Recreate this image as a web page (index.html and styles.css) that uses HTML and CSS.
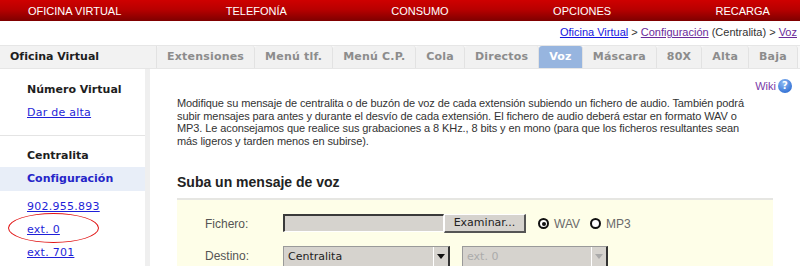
FILE: index.html
```html
<!DOCTYPE html>
<html lang="es">
<head>
<meta charset="utf-8">
<title>Oficina Virtual - Voz</title>
<link rel="stylesheet" href="styles.css">
</head>
<body>
<nav class="topnav">
  <a href="#">OFICINA VIRTUAL</a>
  <a href="#">TELEFONÍA</a>
  <a href="#">CONSUMO</a>
  <a href="#">OPCIONES</a>
  <a href="#">RECARGA</a>
</nav>
<div class="crumbs">
  <a class="lnk" href="#">Oficina Virtual</a>&nbsp;&gt; <a class="vis" href="#">Configuración</a>&nbsp;(Centralita) &gt; <a class="vis" href="#">Voz</a>
</div>
<div class="tabbar">
  <div class="tab-title">Oficina Virtual</div>
  <ul class="tabs">
    <li>Extensiones</li>
    <li>Menú tlf.</li>
    <li>Menú C.P.</li>
    <li>Cola</li>
    <li>Directos</li>
    <li class="active">Voz</li>
    <li>Máscara</li>
    <li>80X</li>
    <li>Alta</li>
    <li>Baja</li>
  </ul>
</div>
<div class="layout">
  <aside class="sidebar">
    <section class="side-sec first">
      <h4 class="side-title">Número Virtual</h4>
      <a class="side-link" href="#">Dar de alta</a>
    </section>
    <section class="side-sec second">
      <h4 class="side-title">Centralita</h4>
      <div class="side-current">Configuración</div>
      <ul class="side-list">
        <li><a class="side-link" href="#">902.955.893</a></li>
        <li><a class="side-link" href="#">ext. 0</a></li>
        <li><a class="side-link" href="#">ext. 701</a></li>
      </ul>
    </section>
    <span class="annot"></span>
  </aside>
  <main class="main">
    <div class="wiki-row"><a class="wiki" href="#">Wiki</a><span class="help">?</span></div>
    <p class="intro">Modifique su mensaje de centralita o de buzón de voz de cada extensión subiendo un fichero de audio. También podrá subir mensajes para antes y durante el desvío de cada extensión. El fichero de audio deberá estar en formato WAV o MP3. Le aconsejamos que realice sus grabaciones a 8 KHz., 8 bits y en mono (para que los ficheros resultantes sean más ligeros y tarden menos en subirse).</p>
    <h3 class="section-title">Suba un mensaje de voz</h3>
    <form class="upload">
      <div class="row">
        <label class="lbl">Fichero:</label>
        <span class="textbox"></span>
        <span class="btn">Examinar...</span>
        <span class="radio checked"></span><span class="rlabel">WAV</span>
        <span class="radio"></span><span class="rlabel">MP3</span>
      </div>
      <div class="row second-row">
        <label class="lbl">Destino:</label>
        <div class="select main-select"><span class="val">Centralita</span><span class="arrow"><span class="tri"></span></span></div>
        <div class="select disabled"><span class="val">ext. 0</span><span class="arrow"><span class="tri"></span></span></div>
      </div>
    </form>
  </main>
</div>
</body>
</html>
```

FILE: styles.css
```css
html, body {
  margin: 0;
  padding: 0;
  overflow: hidden;
}
body {
  width: 800px;
  height: 266px;
  background: #fff;
  font-family: "DejaVu Sans", sans-serif;
  font-size: 11px;
  color: #333;
}

/* top navigation */
.topnav {
  height: 21px;
  display: flex;
  justify-content: space-between;
  align-items: center;
  padding: 0 30px 0 28px;
  background: linear-gradient(#cf0000, #b80000 45%, #7e0000);
  font-family: "Liberation Sans", Arial, sans-serif;
  font-size: 11px;
}
.topnav a {
  color: #fff;
  text-decoration: none;
}

/* breadcrumb */
.crumbs {
  height: 24px;
  line-height: 20px;
  padding-top: 1px;
  text-align: right;
  padding-right: 3px;
  font-family: "Liberation Sans", Arial, sans-serif;
  font-size: 11px;
  color: #333;
  box-sizing: border-box;
}
.lnk { color: #1515e0; }
.vis { color: #6a2a9a; }

/* tabs */
.tabbar {
  display: flex;
  height: 24px;
  box-sizing: border-box;
  border-top: 1px solid #e6e6e6;
  border-bottom: 1px solid #e6e6e6;
  background: #f7f7f7;
}
.tab-title {
  width: 157px;
  box-sizing: border-box;
  padding-left: 10px;
  line-height: 22px;
  font-weight: bold;
  color: #1e1e1e;
  background: #f2f2f2;
  border-right: 1px solid #e2e2e2;
}
.tabs {
  display: flex;
  margin: 0;
  padding: 0;
  list-style: none;
}
.tabs li {
  padding: 0 10px;
  line-height: 22px;
  font-weight: bold;
  letter-spacing: 0.2px;
  color: #8c8c8c;
  background: #f1f1f1;
  border-right: 1px solid #e2e2e2;
  border-radius: 3px 3px 0 0;
}
.tabs li.active {
  background: #97b5df;
  color: #fff;
}

/* layout */
.layout {
  display: flex;
}
.sidebar {
  position: relative;
  width: 145px;
  flex: none;
  border-right: 5px solid #efefef;
  height: 200px;
}
.side-sec.first {
  padding: 10px 0 11px 27px;
  border-bottom: 1px solid #e4e4e4;
}
.side-sec.second {
  padding-top: 9px;
}
.side-title {
  margin: 0;
  font-size: 11px;
  line-height: 22px;
  font-weight: bold;
  color: #1e1e1e;
}
.second .side-title {
  padding-left: 27px;
}
.side-link {
  display: block;
  line-height: 23px;
  color: #1f1fd8;
  letter-spacing: 0.25px;
}
.side-current {
  line-height: 24px;
  padding-left: 27px;
  background: #e8eef8;
  color: #2525c8;
  font-weight: bold;
}
.side-list {
  list-style: none;
  margin: 0;
  padding: 4px 0 0 27px;
}
.annot {
  position: absolute;
  left: 8px;
  top: 144px;
  width: 89px;
  height: 28px;
  border: 1.6px solid #e11414;
  border-radius: 50%;
}

/* main */
.main {
  flex: 1;
}
.wiki-row {
  display: flex;
  justify-content: flex-end;
  align-items: center;
  gap: 2px;
  height: 14px;
  padding: 10px 8px 0 0;
  font-family: "Liberation Sans", Arial, sans-serif;
  font-size: 11px;
}
.wiki {
  color: #7a3aa8;
  text-decoration: none;
}
.help {
  width: 14px;
  height: 14px;
  border-radius: 50%;
  background: radial-gradient(circle at 40% 30%, #8fbaf2, #3b78d8 70%, #2a60c0);
  color: #fff;
  font-family: "DejaVu Sans", sans-serif;
  font-weight: bold;
  font-size: 10px;
  line-height: 14px;
  text-align: center;
}
.intro {
  margin: 4px 0 0 27px;
  width: 572px;
  font-family: "Liberation Sans", Arial, sans-serif;
  font-size: 11px;
  letter-spacing: -0.1px;
  line-height: 12.6px;
  color: #333;
}
.section-title {
  margin: 27px 0 0 27px;
  font-family: "Liberation Sans", Arial, sans-serif;
  font-size: 14px;
  line-height: 16px;
  font-weight: bold;
  color: #222;
}
.upload {
  margin: 8px 0 0 27px;
  width: 596px;
  height: 80px;
  box-sizing: border-box;
  background: #fefee8;
  border-top: 2px solid #e6e6e2;
  padding: 14px 0 0 28px;
}
.row {
  display: flex;
  align-items: center;
  height: 19px;
}
.second-row {
  margin-top: 13px;
}
.lbl {
  width: 78px;
  font-family: "Liberation Sans", Arial, sans-serif;
  font-size: 12px;
  color: #555;
}
.textbox {
  width: 161px;
  height: 18px;
  box-sizing: border-box;
  background: #d6d3ce;
  border-top: 2px solid #3a3a3a;
  border-left: 2px solid #3a3a3a;
  border-right: 1px solid #fff;
  border-bottom: 1px solid #fff;
  align-self: flex-start;
}
.btn {
  width: 82px;
  height: 19px;
  box-sizing: border-box;
  background: #d6d3ce;
  border-top: 1px solid #fff;
  border-left: 1px solid #fff;
  border-right: 2px solid #555;
  border-bottom: 2px solid #555;
  font-size: 11px;
  line-height: 16px;
  text-align: center;
  color: #222;
}
.radio {
  width: 11px;
  height: 11px;
  box-sizing: border-box;
  border: 2px solid #111;
  border-radius: 50%;
  background: #fff;
  margin-left: 12px;
  position: relative;
}
.radio + .rlabel {
  margin-left: 5px;
}
.rlabel + .radio {
  margin-left: 10px;
}
.radio.checked::after {
  content: "";
  position: absolute;
  left: 1.5px;
  top: 1.5px;
  width: 4px;
  height: 4px;
  border-radius: 50%;
  background: #111;
}
.rlabel {
  font-family: "Liberation Sans", Arial, sans-serif;
  font-size: 12px;
  color: #6a6a6a;
}
.select {
  display: flex;
  align-items: stretch;
  height: 22px;
  box-sizing: border-box;
  align-self: flex-start;
  background: #d6d3ce;
  border-top: 1px solid #9a9a9a;
  border-left: 1px solid #9a9a9a;
  border-right: 2px solid #333;
  border-bottom: 2px solid #333;
}
.main-select {
  width: 167px;
}
.select.disabled {
  width: 146px;
  margin-left: 12px;
}
.val {
  flex: 1;
  padding-left: 4px;
  line-height: 19px;
  font-size: 11px;
  color: #222;
}
.disabled .val {
  color: #ababab;
}
.arrow {
  width: 15px;
  border-left: 1px solid #fff;
  display: flex;
  justify-content: center;
  padding-top: 7px;
  box-sizing: border-box;
}
.tri {
  width: 0;
  height: 0;
  border-left: 4px solid transparent;
  border-right: 4px solid transparent;
  border-top: 5px solid #111;
}
.disabled .tri {
  border-top-color: #aaa;
}
```
